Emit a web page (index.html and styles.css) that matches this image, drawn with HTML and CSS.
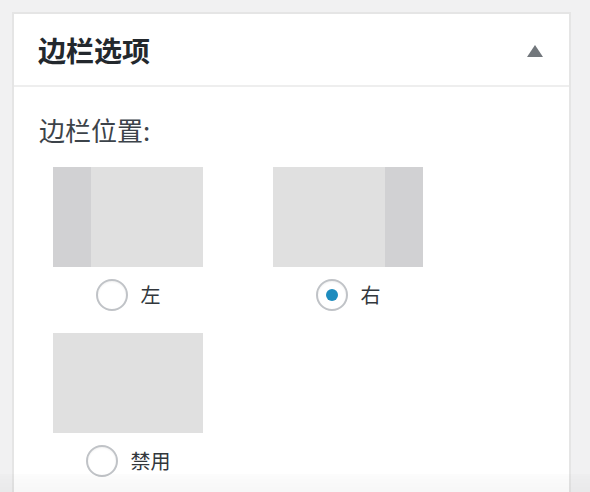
FILE: index.html
```html
<!DOCTYPE html>
<html lang="zh">
<head>
<meta charset="utf-8">
<title>边栏选项</title>
<link rel="stylesheet" href="styles.css">
</head>
<body>
<div class="panel">
  <div class="panel-head">
    <h2 class="panel-title">边栏选项</h2>
    <span class="toggle"></span>
  </div>
  <div class="panel-body">
    <div class="field-label">边栏位置:</div>
    <div class="layout-grid">
      <label class="choice">
        <span class="thumb thumb-left"><span class="bar"></span></span>
        <span class="opt"><span class="radio"></span><span class="opt-text">左</span></span>
      </label>
      <label class="choice">
        <span class="thumb thumb-right"><span class="bar"></span></span>
        <span class="opt"><span class="radio checked"></span><span class="opt-text">右</span></span>
      </label>
      <label class="choice">
        <span class="thumb"></span>
        <span class="opt"><span class="radio"></span><span class="opt-text">禁用</span></span>
      </label>
    </div>
  </div>
</div>
<div class="bottom-fade"></div>
</body>
</html>
```
FILE: styles.css
```css
html, body {
  margin: 0;
  padding: 0;
}
body {
  background: #f1f1f2;
  font-family: "Noto Sans CJK SC", "Noto Sans", sans-serif;
  color: #23282d;
  height: 492px;
  overflow: hidden;
}
.panel {
  margin: 12px 0 0 12px;
  width: 555px;
  height: 478px;
  background: #fff;
  border: 2px solid #e5e5e5;
  border-bottom: none;
  overflow: hidden;
}
.panel-head {
  height: 71px;
  border-bottom: 2px solid #eeeeee;
  display: flex;
  align-items: center;
  justify-content: space-between;
  padding: 0 26px 0 24px;
}
.panel-title {
  margin: 0;
  font-size: 28px;
  font-weight: 700;
  line-height: 1;
  color: #23282d;
}
.toggle {
  width: 0;
  height: 0;
  border-left: 8px solid transparent;
  border-right: 8px solid transparent;
  border-bottom: 12px solid #72777c;
  margin-top: 2px;
}
.panel-body {
  padding: 25px 24px 0 25px;
}
.field-label {
  font-size: 26px;
  line-height: 36px;
  color: #3c434a;
}
.layout-grid {
  margin: 19px 0 0 14px;
  display: grid;
  grid-template-columns: 150px 150px;
  column-gap: 70px;
  row-gap: 22px;
}
.choice {
  display: flex;
  flex-direction: column;
  align-items: center;
}
.thumb {
  width: 150px;
  height: 100px;
  background: #e0e0e0;
  display: flex;
}
.thumb-right {
  justify-content: flex-end;
}
.bar {
  width: 38px;
  height: 100%;
  background: #d1d1d3;
}
.opt {
  margin-top: 12px;
  display: flex;
  align-items: center;
  gap: 13px;
  height: 32px;
}
.radio {
  width: 28px;
  height: 28px;
  border: 2px solid #c0c3c7;
  border-radius: 50%;
  background: #fff;
  display: flex;
  align-items: center;
  justify-content: center;
  box-shadow: inset 0 1px 2px rgba(0,0,0,0.06);
}
.radio.checked::after {
  content: "";
  width: 12px;
  height: 12px;
  border-radius: 50%;
  background: #1e8cbe;
}
.opt-text {
  font-size: 20px;
  line-height: 32px;
  color: #32373c;
}
.bottom-fade {
  position: fixed;
  left: 0;
  right: 0;
  bottom: 0;
  height: 18px;
  background: linear-gradient(to bottom, rgba(0,0,0,0.012), rgba(0,0,0,0.03));
}
```
